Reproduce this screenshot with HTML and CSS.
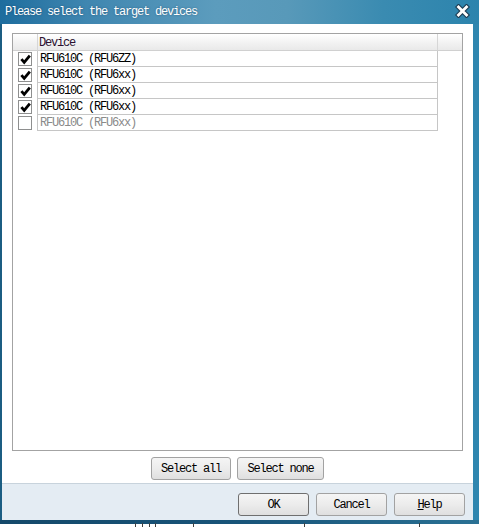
FILE: index.html
```html
<!DOCTYPE html>
<html>
<head>
<meta charset="utf-8">
<link rel="stylesheet" href="styles.css">
</head>
<body>
<div class="desktop">
  <div class="window">
    <div class="titlebar">
      <span class="title">Please select the target devices</span>
      <span class="close">
        <svg width="15" height="14" viewBox="0 0 15 14">
          <path d="M3.5 3 L11.5 11 M11.5 3 L3.5 11" stroke="#1d3c52" stroke-width="5" stroke-linecap="square"/>
          <path d="M3.5 3 L11.5 11 M11.5 3 L3.5 11" stroke="#ffffff" stroke-width="2.8" stroke-linecap="square"/>
        </svg>
      </span>
    </div>
    <div class="client">
      <div class="content">
        <div class="grid">
          <div class="head">
            <div class="cb-cell"></div>
            <div class="text-cell">Device</div>
            <div class="filler"></div>
          </div>
          <div class="row">
            <div class="cb-cell"><span class="cb checked"><svg width="11" height="11" viewBox="0 0 11 11"><path d="M1.4 5.2 L4.2 8.4 L9.8 1.6" stroke="#000" stroke-width="2.8" fill="none"/></svg></span></div>
            <div class="text-cell">RFU610C (RFU6ZZ)</div>
          </div>
          <div class="row">
            <div class="cb-cell"><span class="cb checked"><svg width="11" height="11" viewBox="0 0 11 11"><path d="M1.4 5.2 L4.2 8.4 L9.8 1.6" stroke="#000" stroke-width="2.8" fill="none"/></svg></span></div>
            <div class="text-cell">RFU610C (RFU6xx)</div>
          </div>
          <div class="row">
            <div class="cb-cell"><span class="cb checked"><svg width="11" height="11" viewBox="0 0 11 11"><path d="M1.4 5.2 L4.2 8.4 L9.8 1.6" stroke="#000" stroke-width="2.8" fill="none"/></svg></span></div>
            <div class="text-cell">RFU610C (RFU6xx)</div>
          </div>
          <div class="row">
            <div class="cb-cell"><span class="cb checked"><svg width="11" height="11" viewBox="0 0 11 11"><path d="M1.4 5.2 L4.2 8.4 L9.8 1.6" stroke="#000" stroke-width="2.8" fill="none"/></svg></span></div>
            <div class="text-cell">RFU610C (RFU6xx)</div>
          </div>
          <div class="row disabled">
            <div class="cb-cell"><span class="cb"></span></div>
            <div class="text-cell">RFU610C (RFU6xx)</div>
          </div>
        </div>
        <div class="select-row">
          <button class="btn w-all">Select all</button>
          <button class="btn w-none">Select none</button>
        </div>
      </div>
      <div class="footer">
        <button class="btn w-70 default">OK</button>
        <button class="btn w-70">Cancel</button>
        <button class="btn w-70"><u>H</u>elp</button>
      </div>
    </div>
    <div class="bottom-frame"></div>
  </div>
  <div class="below">
    <span class="tick t1"></span>
    <span class="tick t2"></span>
    <span class="tick t3"></span>
    <span class="tick t4"></span>
    <span class="tick t5"></span>
    <span class="tick t6"></span>
    <span class="tick t7"></span>
  </div>
</div>
</body>
</html>
```
FILE: styles.css
```css
html, body {
  margin: 0;
  padding: 0;
  background: #ffffff;
}
.desktop {
  width: 480px;
  height: 527px;
  overflow: hidden;
  background: #ffffff;
  font-family: "Liberation Mono", "DejaVu Sans Mono", monospace;
  font-size: 12px;
  letter-spacing: -1.2px;
}
.window {
  width: 479px;
  height: 523px;
  display: flex;
  flex-direction: column;
  background: linear-gradient(90deg, #1b5d82 0%, #2b7aa4 40%, #2f86af 100%);
}
.titlebar {
  height: 24px;
  flex: none;
  display: flex;
  align-items: center;
  justify-content: space-between;
  padding: 0 9px 0 5px;
  background: linear-gradient(90deg, #1e6d9e 0%, #3f86b0 18%, #5c9cbd 45%, #5899b9 60%, #3a8bb1 80%, #2c84ad 100%);
}
.title {
  color: #ffffff;
  line-height: 22px;
  text-shadow: 0 0 2px rgba(20, 60, 90, 0.6);
}
.close {
  display: flex;
  margin-top: -2px;
}
.client {
  flex: 1;
  margin: 0 6px 0 2px;
  background: #ffffff;
  display: flex;
  flex-direction: column;
}
.content {
  flex: 1;
  padding: 9px 10px 3px 10px;
  display: flex;
  flex-direction: column;
}
.grid {
  height: 418px;
  box-sizing: border-box;
  border: 1px solid #a3a3a3;
  background: #ffffff;
}
.head {
  display: flex;
  height: 17px;
  box-sizing: border-box;
  border-bottom: 1px solid #d0d0d0;
  background: linear-gradient(180deg, #ffffff 0%, #f3f3f3 50%, #e9e9e9 100%);
}
.head .text-cell {
  border-bottom: none;
  border-right: 1px solid #d6d6d6;
  border-left: 1px solid #d6d6d6;
  color: #2a1030;
  padding-left: 1px;
  padding-top: 2px;
  line-height: 14px;
}
.head .filler {
  flex: 1;
}
.row {
  display: flex;
  height: 16px;
}
.cb-cell {
  width: 24px;
  flex: none;
  display: flex;
  align-items: flex-start;
}
.cb {
  width: 14px;
  height: 14px;
  box-sizing: border-box;
  margin: 1px 0 0 5px;
  border: 1px solid #8e8f8f;
  background: #ffffff;
  display: flex;
  align-items: center;
  justify-content: center;
}
.text-cell {
  width: 401px;
  flex: none;
  box-sizing: border-box;
  height: 16px;
  line-height: 16px;
  padding-left: 2px;
  border-left: 1px solid #c6c6c6;
  border-right: 1px solid #c6c6c6;
  border-bottom: 1px solid #c6c6c6;
  color: #000000;
  white-space: pre;
}
.row .text-cell {
  line-height: 14px;
  padding-top: 1px;
}
.row.disabled .text-cell {
  color: #8a8a8a;
}
.select-row {
  display: flex;
  justify-content: center;
  gap: 6px;
  margin-top: 6px;
}
.btn {
  height: 23px;
  box-sizing: border-box;
  padding: 0;
  border: 1px solid #a2a2a2;
  border-radius: 3px;
  background: linear-gradient(180deg, #f5f5f5 0%, #ececec 50%, #dfdfdf 100%);
  font-family: "Liberation Mono", "DejaVu Sans Mono", monospace;
  font-size: 12px;
  letter-spacing: -1.2px;
  color: #000000;
  text-align: center;
  line-height: 20px;
}
.w-all {
  width: 80px;
}
.w-none {
  width: 87px;
}
.w-70 {
  width: 71px;
}
.btn.default {
  border-color: #6f6f6f;
}
.footer {
  height: 37px;
  flex: none;
  box-sizing: border-box;
  border-top: 1px solid #c8d3dc;
  background: #e4ecf3;
  display: flex;
  justify-content: flex-end;
  align-items: flex-start;
  gap: 7px;
  padding: 9px 8px 0 0;
}
.bottom-frame {
  height: 4px;
  flex: none;
  background: linear-gradient(90deg, #14496a 0%, #185479 50%, #2a7194 100%);
}
.below {
  height: 4px;
  display: flex;
}
.tick {
  width: 1px;
  height: 4px;
  background: #404040;
}
.t1 { margin-left: 135px; }
.t2 { margin-left: 6px; }
.t3 { margin-left: 6px; }
.t4 { margin-left: 5px; }
.t5 { margin-left: 37px; }
.t6 { margin-left: 110px; }
.t7 { margin-left: 114px; }
```
